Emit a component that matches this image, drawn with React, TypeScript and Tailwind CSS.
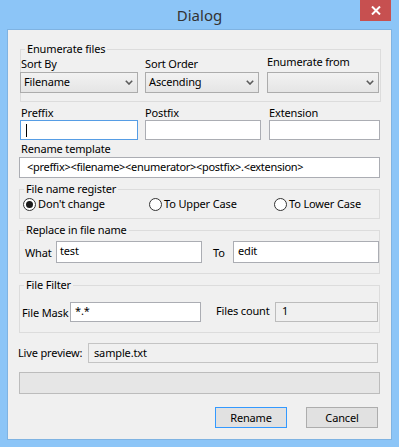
import React from "react";

function Combo({ value, className }: { value?: string; className: string }) {
  return (
    <div
      className={`${className} h-[21px] flex items-center justify-between border border-[#acacac] bg-linear-to-b from-[#f2f2f2] to-[#e5e5e5] pl-[3px] pr-[4px]`}
    >
      <span>{value}</span>
      <svg width="8" height="5" viewBox="0 0 8 5">
        <path d="M0.8 0.8 L4 4 L7.2 0.8" stroke="#5b5b5b" strokeWidth="1.6" fill="none" />
      </svg>
    </div>
  );
}

function Radio({ label, checked, className }: { label: string; checked?: boolean; className: string }) {
  return (
    <div className={`${className} flex items-center gap-[2px]`}>
      <span className="w-[13px] h-[13px] shrink-0 rounded-full border border-[#333] bg-white flex items-center justify-center">
        {checked && <span className="w-[7px] h-[7px] rounded-full bg-[#1a1a1a]" />}
      </span>
      <span>{label}</span>
    </div>
  );
}

function Legend({ children }: { children: React.ReactNode }) {
  return <legend className="ml-[4px] px-[2px] leading-[14px]">{children}</legend>;
}

export default function App() {
  return (
    <div className="w-[399px] h-[447px] overflow-hidden bg-[#8cc5f7] flex flex-col font-['Noto_Sans',sans-serif] text-[11px] tracking-[-0.15px] text-black whitespace-nowrap">
      <div className="relative h-[29px] shrink-0 flex items-center justify-center">
        <span className="text-[15px] tracking-normal text-[#333] mt-[2px]">Dialog</span>
        <div className="absolute right-[8px] top-0 w-[31px] h-[21px] bg-[#c75050] flex items-center justify-center">
          <svg width="10" height="9" viewBox="0 0 10 9">
            <path d="M1 0.5 L9 8.5 M9 0.5 L1 8.5" stroke="#fff" strokeWidth="2" />
          </svg>
        </div>
      </div>

      <div className="flex-1 mx-[7px] mb-[7px] border border-[#7fb3e2] bg-[#f0f0f0] flex flex-col px-[11px] pt-[12px]">
        {/* Enumerate files */}
        <fieldset className="border border-[#dcdcdc] ml-px -mr-px pb-[8px]">
          <Legend>Enumerate files</Legend>
          <div className="flex -ml-px">
            <div className="w-[118px] flex flex-col">
              <span className="leading-[16px] pl-px">Sort By</span>
              <Combo className="w-[118px]" value="Filename" />
            </div>
            <div className="w-[114px] ml-[7px] flex flex-col">
              <span className="leading-[16px]">Sort Order</span>
              <Combo className="w-[114px]" value="Ascending" />
            </div>
            <div className="w-[112px] ml-[8px] flex flex-col">
              <span className="leading-[16px] -mt-[2px] mb-[2px]">Enumerate from</span>
              <Combo className="w-[112px]" />
            </div>
          </div>
        </fieldset>

        {/* Preffix / Postfix / Extension */}
        <div className="flex ml-px mt-[3px]">
          <div className="w-[118px] flex flex-col">
            <span className="leading-[15px] pl-px">Preffix</span>
            <div className="h-[20px] border border-[#569de5] bg-white flex items-center pl-[5px]">
              <span className="w-px h-[13px] bg-black" />
            </div>
          </div>
          <div className="w-[116px] ml-[7px] flex flex-col">
            <span className="leading-[15px]">Postfix</span>
            <div className="h-[20px] border border-[#abadb3] bg-white" />
          </div>
          <div className="w-[111px] ml-[8px] flex flex-col">
            <span className="leading-[15px]">Extension</span>
            <div className="h-[20px] border border-[#abadb3] bg-white" />
          </div>
        </div>

        {/* Rename template */}
        <span className="leading-[16px] mt-px pl-[2px]">Rename template</span>
        <div className="h-[21px] border border-[#abadb3] bg-white flex items-center pl-[7px] tracking-[-0.3px]">
          &lt;preffix&gt;&lt;filename&gt;&lt;enumerator&gt;&lt;postfix&gt;.&lt;extension&gt;
        </div>

        {/* File name register */}
        <fieldset className="border border-[#dcdcdc] mt-[4px] pb-[6px]">
          <Legend>File name register</Legend>
          <div className="flex h-[16px] pl-[3px]">
            <Radio className="w-[126px]" label="Don't change" checked />
            <Radio className="w-[125px]" label="To Upper Case" />
            <Radio className="w-[100px]" label="To Lower Case" />
          </div>
        </fieldset>

        {/* Replace in file name */}
        <fieldset className="border border-[#dcdcdc] mt-[4px] pt-[4px] pb-[10px]">
          <Legend>Replace in file name</Legend>
          <div className="flex items-center pl-[5px]">
            <span className="w-[31px] mt-[2px]">What</span>
            <div className="w-[146px] h-[22px] border border-[#abadb3] bg-white pl-[3px] leading-[18px]">test</div>
            <span className="w-[20px] ml-[11px] mt-[2px]">To</span>
            <div className="w-[146px] h-[22px] border border-[#abadb3] bg-white pl-[4px] leading-[18px]">edit</div>
          </div>
        </fieldset>

        {/* File Filter */}
        <fieldset className="border border-[#dcdcdc] mt-[4px] pt-[10px] pb-[10px]">
          <Legend>File Filter</Legend>
          <div className="flex items-center pl-[2px]">
            <span className="w-[48px] mt-[2px]">File Mask</span>
            <div className="w-[131px] h-[20px] border border-[#abadb3] bg-white pl-[4px] leading-[16px]">*.*</div>
            <span className="w-[59px] ml-[15px] -mt-[2px]">Files count</span>
            <div className="w-[103px] h-[20px] border border-[#bcbcbc] bg-[#f0f0f0] pl-[6px] leading-[16px]">1</div>
          </div>
        </fieldset>

        {/* Live preview */}
        <div className="flex items-center mt-[10px] -ml-px">
          <span className="w-[70px]">Live preview:</span>
          <div className="w-[290px] h-[20px] border border-[#c4c4c4] bg-[#f0f0f0] pl-[5px] leading-[18px]">sample.txt</div>
        </div>

        {/* Progress */}
        <div className="h-[22px] mt-[9px] border border-[#bcbcbc] bg-[#e6e6e6]" />

        {/* Buttons */}
        <div className="flex justify-end gap-[19px] mt-[13px] mr-[2px]">
          <button className="w-[72px] h-[21px] border border-[#3399ff] bg-[#e1e1e1] leading-[18px]">Rename</button>
          <button className="w-[72px] h-[21px] border border-[#adadad] bg-[#e1e1e1] leading-[18px]">Cancel</button>
        </div>
      </div>
    </div>
  );
}
